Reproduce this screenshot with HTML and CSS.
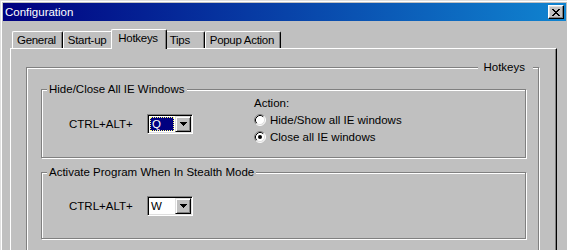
FILE: index.html
```html
<!DOCTYPE html>
<html lang="en">
<head>
  <meta charset="UTF-8">
  <title>Configuration</title>
  <link rel="stylesheet" href="styles.css">
</head>
<body>
  <div class="window">
    <div class="titlebar">
      <span class="title">Configuration</span>
      <button class="close-button" type="button">
        <svg width="8" height="7" viewBox="0 0 8 7" shape-rendering="crispEdges">
          <rect x="0" y="0" width="2" height="1"/><rect x="6" y="0" width="2" height="1"/>
          <rect x="1" y="1" width="2" height="1"/><rect x="5" y="1" width="2" height="1"/>
          <rect x="2" y="2" width="4" height="1"/>
          <rect x="3" y="3" width="2" height="1"/>
          <rect x="2" y="4" width="4" height="1"/>
          <rect x="1" y="5" width="2" height="1"/><rect x="5" y="5" width="2" height="1"/>
          <rect x="0" y="6" width="2" height="1"/><rect x="6" y="6" width="2" height="1"/>
        </svg>
      </button>
    </div>

    <div class="dialog">
      <div class="tabs">
        <div class="tab">General</div>
        <div class="tab">Start-up</div>
        <div class="tab tab-active">Hotkeys</div>
        <div class="tab">Tips</div>
        <div class="tab">Popup Action</div>
      </div>

      <div class="panel">
        <fieldset class="group group-main">
          <legend class="legend-right">Hotkeys</legend>
          <div class="group-main-body">

            <fieldset class="group">
              <legend>Hide/Close All IE Windows</legend>
              <div class="group-body group-body-first">
                <div class="hotkey">
                  <span class="hotkey-label">CTRL+ALT+</span>
                  <div class="combo">
                    <div class="combo-field"><span class="combo-selected">Q</span></div>
                    <div class="combo-button">
                      <svg width="7" height="4" viewBox="0 0 7 4" shape-rendering="crispEdges">
                        <rect x="0" y="0" width="7" height="1"/><rect x="1" y="1" width="5" height="1"/>
                        <rect x="2" y="2" width="3" height="1"/><rect x="3" y="3" width="1" height="1"/>
                      </svg>
                    </div>
                  </div>
                </div>
                <div class="action">
                  <div class="action-title">Action:</div>
                  <label class="radio">
                    <svg width="12" height="12" viewBox="0 0 12 12">
                      <circle cx="6" cy="6" r="5" fill="#fff"/>
                      <path d="M2.11 9.89 A5.5 5.5 0 0 1 9.89 2.11" fill="none" stroke="#808080"/>
                      <path d="M9.89 2.11 A5.5 5.5 0 0 1 2.11 9.89" fill="none" stroke="#fff"/>
                      <path d="M2.82 9.18 A4.5 4.5 0 0 1 9.18 2.82" fill="none" stroke="#000"/>
                      <path d="M9.18 2.82 A4.5 4.5 0 0 1 2.82 9.18" fill="none" stroke="#dfdfdf"/>
                    </svg>
                    Hide/Show all IE windows
                  </label>
                  <label class="radio">
                    <svg width="12" height="12" viewBox="0 0 12 12">
                      <circle cx="6" cy="6" r="5" fill="#fff"/>
                      <path d="M2.11 9.89 A5.5 5.5 0 0 1 9.89 2.11" fill="none" stroke="#808080"/>
                      <path d="M9.89 2.11 A5.5 5.5 0 0 1 2.11 9.89" fill="none" stroke="#fff"/>
                      <path d="M2.82 9.18 A4.5 4.5 0 0 1 9.18 2.82" fill="none" stroke="#000"/>
                      <path d="M9.18 2.82 A4.5 4.5 0 0 1 2.82 9.18" fill="none" stroke="#dfdfdf"/>
                      <circle cx="6" cy="6" r="2" fill="#000"/>
                    </svg>
                    Close all IE windows
                  </label>
                </div>
              </div>
            </fieldset>

            <fieldset class="group group-second">
              <legend>Activate Program When In Stealth Mode</legend>
              <div class="group-body group-body-second">
                <div class="hotkey">
                  <span class="hotkey-label">CTRL+ALT+</span>
                  <div class="combo">
                    <div class="combo-field"><span class="combo-text">W</span></div>
                    <div class="combo-button">
                      <svg width="7" height="4" viewBox="0 0 7 4" shape-rendering="crispEdges">
                        <rect x="0" y="0" width="7" height="1"/><rect x="1" y="1" width="5" height="1"/>
                        <rect x="2" y="2" width="3" height="1"/><rect x="3" y="3" width="1" height="1"/>
                      </svg>
                    </div>
                  </div>
                </div>
              </div>
            </fieldset>

          </div>
        </fieldset>
      </div>
    </div>
  </div>
</body>
</html>
```

FILE: styles.css
```css
* {
  box-sizing: border-box;
}

html, body {
  margin: 0;
  padding: 0;
  overflow: hidden;
  background-color: #c0c0c0;
  font-family: "Liberation Sans", Arial, sans-serif;
  font-size: 11.5px;
  color: #000;
}

.window {
  width: 569px;
  height: 280px;
  background-color: #c0c0c0;
  border: 1px solid;
  border-color: #dfdfdf #404040 #404040 #dfdfdf;
  box-shadow: inset 1px 1px 0 #fff, inset -1px -1px 0 #808080;
  padding: 2px;
}

.titlebar {
  display: flex;
  align-items: center;
  height: 18px;
  padding: 0 2px 0 2px;
  background: linear-gradient(90deg, #000080 0%, #1084d0 100%);
  color: #fff;
}

.title {
  flex: 1;
  line-height: 18px;
}

.close-button {
  display: flex;
  align-items: center;
  justify-content: center;
  width: 16px;
  height: 14px;
  padding: 0;
  background-color: #c0c0c0;
  border: 1px solid;
  border-color: #fff #000 #000 #fff;
  box-shadow: inset -1px -1px 0 #808080, inset 1px 1px 0 #dfdfdf;
}

.dialog {
  padding: 8px 0 0 7px;
}

.tabs {
  display: flex;
  align-items: flex-end;
  height: 19px;
  padding-left: 2px;
}

.tab {
  position: relative;
  min-width: 40px;
  height: 17px;
  padding: 0 6px 0 4px;
  line-height: 16px;
  letter-spacing: -0.3px;
  border-top: 1px solid #fff;
  border-left: 1px solid #fff;
  border-right: 1px solid #000;
  border-radius: 2px 2px 0 0;
  box-shadow: inset -1px 0 0 #808080;
}

.tab-active {
  z-index: 1;
  height: 20px;
  margin: 0 -2px -1px -2px;
  padding: 0 8px 0 6px;
  line-height: 16px;
  background-color: #c0c0c0;
}

.panel {
  width: 547px;
  height: 220px;
  padding: 12px 17px 0 15px;
  border-top: 1px solid #fff;
  border-left: 1px solid #fff;
  border-right: 1px solid #000;
  border-bottom: 1px solid #000;
  box-shadow: inset -1px -1px 0 #808080;
}

.group {
  margin: 0;
  padding: 0;
  min-width: 0;
  border: 1px solid #808080;
  box-shadow: inset 1px 1px 0 #fff, 1px 1px 0 #fff;
}

.group legend {
  margin-left: 5px;
  padding: 0 2px;
  line-height: 13px;
  background-color: #c0c0c0;
}

.group .legend-right {
  margin-left: auto;
  margin-right: 5px;
  padding: 0 8px 0 5px;
}

.group-main {
  height: 200px;
}

.group-main-body {
  padding: 9px 12px 0 14px;
}

.group-second {
  margin-top: 8px;
}

.group-body {
  display: flex;
  align-items: flex-start;
}

.group-body-first {
  height: 61px;
}

.group-body-second {
  height: 59px;
  padding-top: 17px;
}

.group-body-first .hotkey {
  margin-top: 18px;
}

.hotkey {
  display: flex;
  align-items: center;
  width: 212px;
  padding-left: 27px;
}

.hotkey-label {
  width: 78px;
}

.combo {
  display: flex;
  width: 46px;
  height: 20px;
  padding: 1px;
  background-color: #fff;
  border: 1px solid;
  border-color: #808080 #fff #fff #808080;
  box-shadow: inset 1px 1px 0 #000, inset -1px -1px 0 #dfdfdf;
}

.combo-field {
  flex: 1;
  display: flex;
  padding: 1px;
}

.combo-selected {
  flex: 1;
  padding-left: 1px;
  line-height: 12px;
  color: #fff;
  background-color: #000080;
  border: 1px dotted #ffff80;
}

.combo-text {
  padding-left: 1px;
  line-height: 14px;
}

.combo-button {
  display: flex;
  align-items: center;
  justify-content: center;
  width: 16px;
  height: 16px;
  background-color: #c0c0c0;
  border: 1px solid;
  border-color: #dfdfdf #000 #000 #dfdfdf;
  box-shadow: inset 1px 1px 0 #fff, inset -1px -1px 0 #808080;
}

.action {
  display: flex;
  flex-direction: column;
}

.action-title {
  line-height: 15px;
}

.radio {
  display: flex;
  align-items: center;
  gap: 4px;
  height: 17px;
}
```
